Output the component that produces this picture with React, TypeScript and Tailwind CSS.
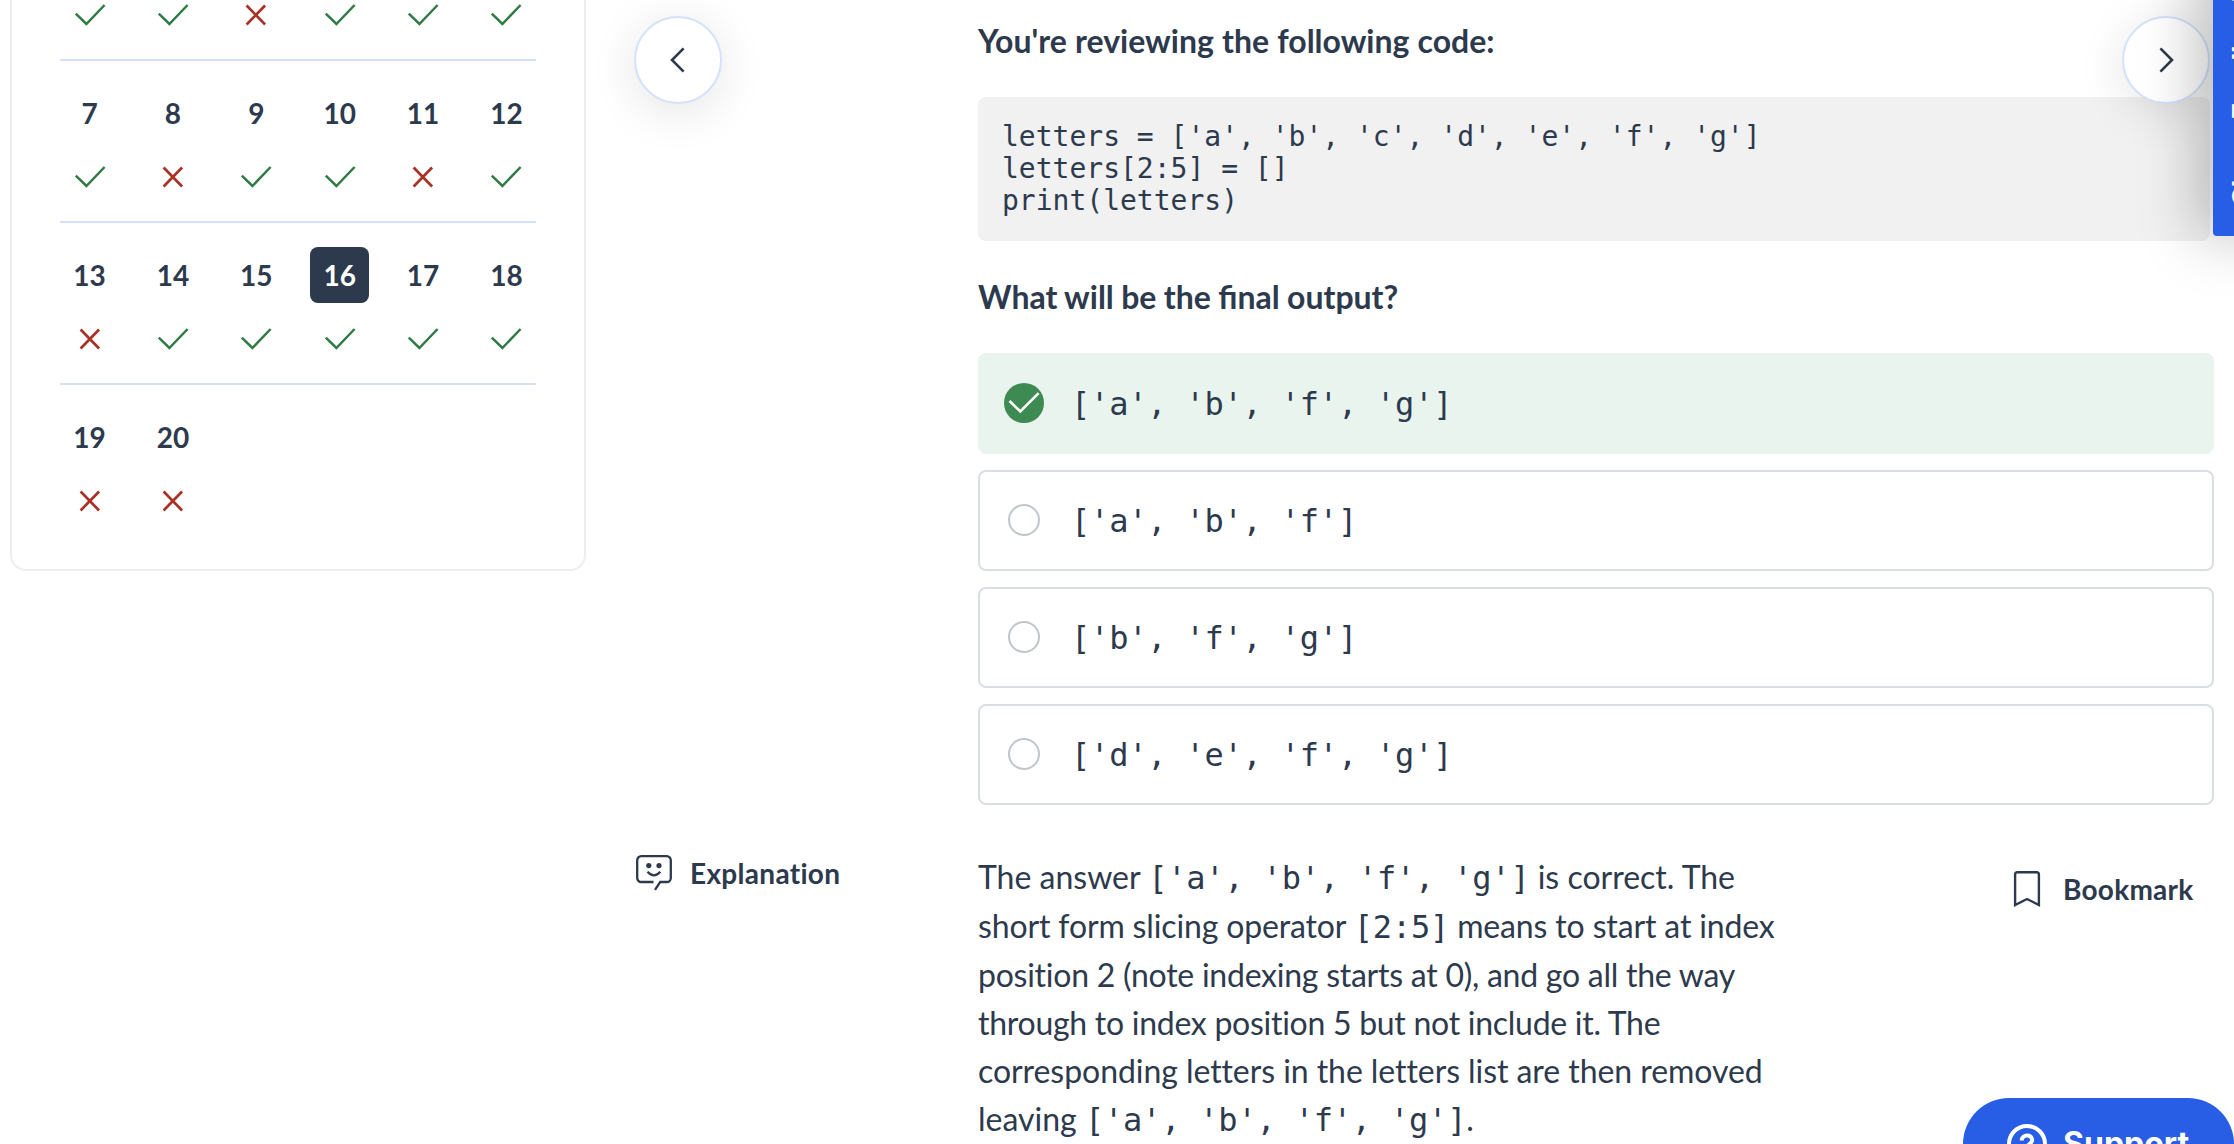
import React from "react";

type Result = "right" | "wrong";

const rows: { n: number | null; result: Result }[][] = [
  [
    { n: null, result: "right" },
    { n: null, result: "right" },
    { n: null, result: "wrong" },
    { n: null, result: "right" },
    { n: null, result: "right" },
    { n: null, result: "right" },
  ],
  [
    { n: 7, result: "right" },
    { n: 8, result: "wrong" },
    { n: 9, result: "right" },
    { n: 10, result: "right" },
    { n: 11, result: "wrong" },
    { n: 12, result: "right" },
  ],
  [
    { n: 13, result: "wrong" },
    { n: 14, result: "right" },
    { n: 15, result: "right" },
    { n: 16, result: "right" },
    { n: 17, result: "right" },
    { n: 18, result: "right" },
  ],
  [
    { n: 19, result: "wrong" },
    { n: 20, result: "wrong" },
  ],
];

const answers = [
  { text: "['a', 'b', 'f', 'g']", correct: true },
  { text: "['a', 'b', 'f']", correct: false },
  { text: "['b', 'f', 'g']", correct: false },
  { text: "['d', 'e', 'f', 'g']", correct: false },
];

function CheckMark() {
  return (
    <svg width="32" height="24" viewBox="0 0 32 24" fill="none" stroke="#2f7a45" strokeWidth="2.5" className="block">
      <path d="M1.8 10.6 L12.4 21 L30.6 2" />
    </svg>
  );
}

function CrossMark() {
  return (
    <svg width="32" height="24" viewBox="0 0 32 24" fill="none" stroke="#a93226" strokeWidth="2.7" className="block">
      <path d="M6.6 2.5 L25.1 21.5 M25.1 2.5 L6.6 21.5" />
    </svg>
  );
}

function QuestionCell({ n, result }: { n: number | null; result: Result }) {
  const active = n === 16;
  return (
    <div className="flex flex-col items-center">
      <div
        className={
          active
            ? "flex h-14 w-[59px] items-center justify-center rounded-lg bg-[#2d3a4d] text-[28px] font-bold leading-none text-white"
            : "flex h-14 w-[59px] items-center justify-center text-[28px] font-bold leading-none"
        }
      >
        {n}
      </div>
      <div className="mt-6">{result === "right" ? <CheckMark /> : <CrossMark />}</div>
    </div>
  );
}

function NavCircle({ dir }: { dir: "left" | "right" }) {
  return (
    <button className="flex size-[88px] items-center justify-center rounded-full border-2 border-[#d4e1fb] bg-white shadow-[0_8px_48px_rgba(0,0,0,0.11)]">
      <svg width="16" height="28" viewBox="0 0 16 28" fill="none" stroke="#2d3a4d" strokeWidth="2.6" className="block">
        {dir === "left" ? <path d="M13.6 2.4 L2 14 L13.6 25.6" /> : <path d="M2.4 2.4 L14 14 L2.4 25.6" />}
      </svg>
    </button>
  );
}

function Mono({ children }: { children: React.ReactNode }) {
  return (
    <code className="font-['DejaVu_Sans_Mono',monospace] text-[32px] tracking-[-0.2px]">{children}</code>
  );
}

export default function App() {
  return (
    <div className="relative flex h-[1144px] w-full overflow-hidden bg-white font-['Lato',sans-serif] text-[#2d3a4d]">
      <aside className="-mt-[140px] ml-[10px] h-[711px] w-[576px] shrink-0 rounded-2xl border-2 border-[#eeeeee] px-12 pt-[37px]">
        {rows.map((row, i) => (
          <div
            key={i}
            className={
              i < rows.length - 1
                ? "grid h-[162px] grid-cols-[repeat(6,59px)] justify-between border-b-2 border-[#d4e1fb] pt-6"
                : "grid h-[162px] grid-cols-[repeat(6,59px)] justify-between pt-6"
            }
          >
            {row.map((q, j) => (
              <QuestionCell key={j} n={q.n} result={q.result} />
            ))}
          </div>
        ))}
      </aside>

      <main className="ml-12 flex w-[1580px] shrink-0 flex-col">
        <section className="flex">
          <div className="w-[344px] shrink-0 pt-4">
            <NavCircle dir="left" />
          </div>
          <div className="flex grow flex-col">
            <h2 className="mt-[17px] text-[32px] font-bold leading-[48px] [word-spacing:0.4px]">
              You're reviewing the following code:
            </h2>
            <pre className="mr-1 mt-8 h-36 rounded-lg bg-[#f1f1f1] px-6 py-6 font-['DejaVu_Sans_Mono',monospace] text-[28px] leading-8">
              {"letters = ['a', 'b', 'c', 'd', 'e', 'f', 'g']\nletters[2:5] = []\nprint(letters)"}
            </pre>
            <h2 className="mt-8 text-[32px] font-bold leading-[48px] [word-spacing:-0.4px]">
              What will be the final output?
            </h2>
            <div className="mt-8 flex flex-col gap-4">
              {answers.map((a) => (
                <div
                  key={a.text}
                  className={
                    a.correct
                      ? "flex h-[101px] items-start rounded-lg bg-[#eaf4ee] pl-[26px] pt-[30px]"
                      : "flex h-[101px] items-start rounded-lg border-2 border-[#dadee3] pl-6 pt-7"
                  }
                >
                  <div className="flex size-10 shrink-0 items-center justify-center">
                    {a.correct ? (
                      <svg width="40" height="40" viewBox="0 0 40 40" fill="none" className="block">
                        <circle cx="20" cy="20" r="20" fill="#3d8a52" />
                        <path d="M5.5 18 L16.3 28.4 L34.6 10.2" stroke="#fff" strokeWidth="2.6" />
                      </svg>
                    ) : (
                      <div className="size-8 rounded-full border-2 border-[#c0c5cc]" />
                    )}
                  </div>
                  <div className="-mt-[3px] ml-[27px] whitespace-pre leading-[48px]">
                    <Mono>{a.text}</Mono>
                  </div>
                </div>
              ))}
            </div>
          </div>
        </section>

        <section className="flex [font-variant-ligatures:none]">
          <div className="mt-[44px] flex h-12 w-[344px] shrink-0 items-center pl-[2px]">
            <svg width="36" height="36" viewBox="0 0 36 36" fill="none" stroke="#2d3a4d" strokeWidth="2.3" className="block">
              <path d="M17.5 27 H5.2 A4 4 0 0 1 1.2 23 V5.2 A4 4 0 0 1 5.2 1.2 H30.8 A4 4 0 0 1 34.8 5.2 V23 A4 4 0 0 1 30.8 27 H24.2 L19 34.8" />
              <circle cx="12.8" cy="10.6" r="2.6" fill="#2d3a4d" stroke="none" />
              <circle cx="23" cy="10.6" r="2.6" fill="#2d3a4d" stroke="none" />
              <path d="M11.5 16.8 Q18 24 24.3 16.8" />
            </svg>
            <span className="ml-[18px] text-[28px] font-bold tracking-[0.3px]">Explanation</span>
          </div>
          <p className="mt-[48px] w-[830px] shrink-0 whitespace-nowrap text-[32px] leading-[48px]">
            The answer <Mono>['a', 'b', 'f', 'g']</Mono> is correct. The
            <br />
            <span className="tracking-[-0.14px]">
              short form slicing operator <Mono>[2:5]</Mono> means to start at index
            </span>
            <br />
            <span className="tracking-[-0.25px]">position 2 (note indexing starts at 0), and go all the way</span>
            <br />
            <span className="tracking-[-0.27px]">through to index position 5 but not include it. The</span>
            <br />
            <span className="tracking-[-0.06px]">corresponding letters in the letters list are then removed</span>
            <br />
            leaving <Mono>['a', 'b', 'f', 'g']</Mono>.
          </p>
          <div className="ml-[205px] mt-[60px] flex h-12 items-center">
            <svg width="28" height="38" viewBox="0 0 28 38" fill="none" stroke="#2d3a4d" strokeWidth="2.4" className="block">
              <path d="M2.1 35 V4.2 A2 2 0 0 1 4.1 2.2 H23.9 A2 2 0 0 1 25.9 4.2 V35 L14 29 Z" />
            </svg>
            <span className="ml-[22px] text-[28px] font-bold tracking-[0.25px]">Bookmark</span>
          </div>
        </section>
      </main>

      <div className="absolute left-[2122px] top-4">
        <NavCircle dir="right" />
      </div>

      <button className="absolute left-[2213px] top-[-60px] flex h-[296px] w-[80px] items-end rounded-[4px] bg-[#285de5] pb-[30px] pl-[10px] shadow-[-15px_0_60px_rgba(0,0,0,0.25)]">
        <span className="block rotate-180 whitespace-nowrap text-left font-['Inter',sans-serif] text-[28px] font-bold leading-10 text-white [writing-mode:vertical-rl]">
          Share Feedback
        </span>
      </button>

      <button className="absolute left-[1963px] top-[1098px] flex h-[92px] w-[271px] items-center rounded-full bg-[#285de5] pl-11 font-['Inter',sans-serif] text-[32px] font-bold text-white">
        <svg width="40" height="40" viewBox="0 0 40 40" fill="none" stroke="#fff" strokeWidth="4" className="block">
          <circle cx="20" cy="20" r="18" />
          <path d="M14.8 16.4 C14.8 10 25.2 10 25.2 16 C25.2 19.6 20 20.4 20 24" />
          <path d="M20 26.5 V30.5" />
        </svg>
        <span className="ml-4">Support</span>
      </button>
    </div>
  );
}
